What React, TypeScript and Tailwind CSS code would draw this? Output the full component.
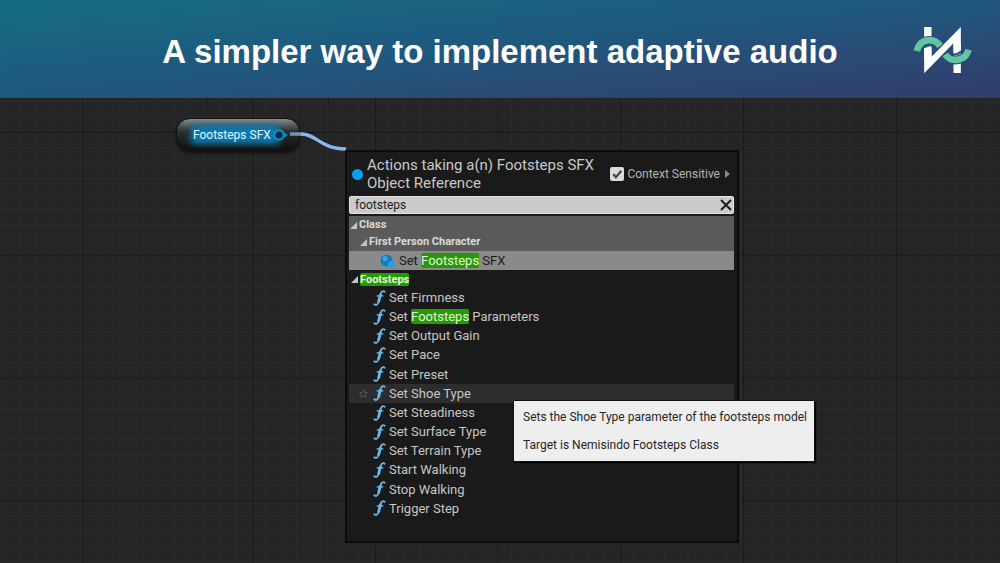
import { useState } from 'react';

const CELL = 15.34;
const MAJOR_X = [82, 252, 375, 497, 620, 743, 896];

const ACTIONS = [
  'Set Firmness',
  'Set Footsteps Parameters',
  'Set Output Gain',
  'Set Pace',
  'Set Preset',
  'Set Shoe Type',
  'Set Steadiness',
  'Set Surface Type',
  'Set Terrain Type',
  'Start Walking',
  'Stop Walking',
  'Trigger Step',
];

function Logo() {
  return (
    <svg viewBox="0 0 176 144" className="h-12 w-[59px]" role="img" aria-label="Nemisindo">
      <path d="M33 3h22v100H33z M121 50h22v91h-22z" fill="#fff" />
      <path d="M11 75C20 38 60 34 82 62" fill="none" stroke="#234f7b" strokeWidth="27" />
      <path d="M94 84C116 114 158 104 166 71" fill="none" stroke="#28487a" strokeWidth="27" />
      <path d="M33 66h22v26L143 3v26L33 142z M121 50l22-23v52h-22z" fill="#fff" />
      <path d="M33 64C46 56 56 57 63 60" fill="none" stroke="#234f7b" strokeWidth="6" />
      <path d="M119 86C128 86 137 83 145 76" fill="none" stroke="#28487a" strokeWidth="6" />
      <path d="M11 75C20 36 62 34 81 60" fill="none" stroke="#63c5a1" strokeWidth="20" />
      <path d="M96 85C116 113 158 104 166 71" fill="none" stroke="#63c5a1" strokeWidth="20" />
    </svg>
  );
}

function GraphGrid() {
  const columns = Array.from({ length: 140 }, (_, i) => 5.3 + i * CELL);
  const rows = Array.from({ length: 90 }, (_, i) => 3.8 + i * CELL);
  return (
    <svg className="absolute inset-0 h-full w-full" aria-hidden="true">
      {columns.map((x) => (
        <line key={x} x1={x} x2={x} y1="0" y2="100%" stroke="#2c2c2c" />
      ))}
      {rows.map((y) => (
        <line key={y} x1="0" x2="100%" y1={y} y2={y} stroke="#2d2d2d" />
      ))}
      {MAJOR_X.map((x) => (
        <line key={x} x1={x + 0.5} x2={x + 0.5} y1="0" y2="100%" stroke="#1b1b1b" />
      ))}
      {Array.from({ length: 12 }, (_, i) => 34.5 + i * CELL * 8).map((y) => (
        <line key={y} x1="0" x2="100%" y1={y} y2={y} stroke="#191919" />
      ))}
      <path d="M206.5 0v9 M328.5 0v9" stroke="#1a1a1a" />
    </svg>
  );
}

function FunctionIcon() {
  return (
    <svg viewBox="0 0 36 46" className="h-4 w-[13px] shrink-0" fill="none" stroke="#6bb8e8" aria-hidden="true">
      <path d="M33 5C27 1 23 5 21 13L15 35C13 42 8 45 3 41" strokeWidth="5" strokeLinecap="round" />
      <path d="M21 12L15 36" strokeWidth="8" />
      <path d="M10 17H29" strokeWidth="4" />
    </svg>
  );
}

function Arrow() {
  return (
    <svg viewBox="0 0 7 7" className="h-[7px] w-[7px] shrink-0" aria-hidden="true">
      <path d="M7 0V7H0z" fill="#c4c4c4" />
    </svg>
  );
}

function Highlighted({ text }: { text: string }) {
  return (
    <span className="whitespace-pre">
      {text.split(/(Footsteps)/).map((part, i) =>
        part === 'Footsteps' ? (
          <mark key={i} className="rounded-xs bg-[#269a04] text-[#e4f5dc]">
            {part}
          </mark>
        ) : (
          part
        ),
      )}
    </span>
  );
}

function VariableNode() {
  return (
    <div className="absolute top-5 left-[176px] flex h-[33px] items-center gap-0.5 overflow-hidden rounded-[14px] border border-[#111] bg-linear-to-b from-[#8a8e90] via-[#2b2f30] via-40% to-[#10110f] pr-[11px] pl-4 shadow-[0_2px_3px_#0009]">
      <div className="absolute top-1.5 right-5 bottom-1.5 left-3.5 bg-[#087bb4] blur-[3px]" />
      <span className="relative text-xs text-[#e2f3fb]">Footsteps SFX</span>
      <svg viewBox="0 0 15 12" className="relative h-3 w-[15px]" aria-hidden="true">
        <circle cx="6" cy="6" r="4.700" fill="#05283a" stroke="#0b8ecb" strokeWidth="2.200" />
        <path d="M11 3.5L15 6L11 8.5z" fill="#0b92d2" />
      </svg>
    </div>
  );
}

function ActionMenu() {
  const [query, setQuery] = useState('footsteps');
  const [contextual, setContextual] = useState(true);
  return (
    <section className="absolute top-[52px] left-[345px] min-h-[393px] w-[394px] border-2 border-[#0b0b0b] bg-[#1a1a1a] pr-[3px] pl-0.5 text-[13px] text-[#c6c6c6]">
      <div className="flex h-11 items-center pr-1 pl-[3px]">
        <span className="mr-1 h-[11px] w-[11px] shrink-0 rounded-full bg-[#08a0ec]" />
        <h2 className="flex-1 text-[15px] leading-[18px] text-[#c8c8c8]">
          Actions taking a(n) Footsteps SFX
          <br />
          Object Reference
        </h2>
        <label className="flex items-center gap-[3px] text-xs text-[#b4b4b4]">
          <span className="grid h-3.5 w-3.5">
            <input
              type="checkbox"
              checked={contextual}
              onChange={(e) => setContextual(e.target.checked)}
              className="col-start-1 row-start-1 h-3.5 w-3.5 appearance-none rounded-xs bg-[#dcdcdc]"
            />
            {contextual && (
              <svg viewBox="0 0 13 13" className="pointer-events-none col-start-1 row-start-1" fill="none" aria-hidden="true">
                <path d="M3 6.5L5.5 9.5L10.5 3.5" stroke="#4a4a4a" strokeWidth="2.2" />
              </svg>
            )}
          </span>
          Context Sensitive
          <svg viewBox="0 0 5 8" className="ml-0.5 h-2 w-[5px]" aria-hidden="true">
            <path d="M0 0L5 4L0 8z" fill="#8a8a8a" />
          </svg>
        </label>
      </div>

      <div className="flex h-[18px] items-center rounded-xs border border-[#e6e6e6] bg-[#cbcbcb] text-[#222]">
        <input
          aria-label="Search actions"
          value={query}
          onChange={(e) => setQuery(e.target.value)}
          className="min-w-0 flex-1 bg-transparent pl-[5px] text-xs outline-none"
        />
        <button type="button" aria-label="Clear search" onClick={() => setQuery('')} className="px-px">
          <svg viewBox="0 0 12 12" className="h-3 w-3" stroke="#1c1c1c" strokeWidth="2" aria-hidden="true">
            <path d="M1 1L11 11M11 1L1 11" />
          </svg>
        </button>
      </div>

      <div className="mt-0.5 bg-[#5a5a5a] text-[11px] font-bold text-[#dadada]">
        <div className="flex h-[18px] items-center gap-0.5 pl-px">
          <Arrow />
          Class
        </div>
        <div className="flex h-[17px] items-center gap-0.5 pl-[11px]">
          <Arrow />
          First Person Character
        </div>
      </div>
      <div className="flex h-[19px] items-center gap-1 bg-[#8a8a8a] pl-[31px] text-[#1b1b1b]">
        <svg viewBox="0 0 15 14" className="h-3.5 w-[15px]" aria-hidden="true">
          <circle cx="6.5" cy="6.5" r="6" fill="#0d7fbe" />
          <circle cx="5" cy="4.5" r="2.5" fill="#3aa5dc" />
          <circle cx="11.5" cy="10.5" r="3.5" fill="#2a9fe0" />
        </svg>
        <Highlighted text="Set Footsteps SFX" />
      </div>
      <div className="flex h-[18px] items-center gap-0.5 pl-0.5 text-[11px] leading-[13px] font-bold">
        <Arrow />
        <Highlighted text="Footsteps" />
      </div>
      <ul className="grid h-[230px] auto-rows-fr">
        {ACTIONS.map((action) => (
          <li
            key={action}
            className={
              action === 'Set Shoe Type'
                ? 'flex items-center gap-[3px] bg-[#2d2d2d] pl-2.5'
                : 'flex items-center gap-[3px] pl-6'
            }
          >
            {action === 'Set Shoe Type' && (
              <svg viewBox="0 0 24 24" className="mr-0.5 h-[9px] w-[9px]" fill="none" stroke="#585858" strokeWidth="2.5" aria-hidden="true">
                <path d="M12 2l3 7 8 .6-6 5 2 7.400-7-4-7 4 2-7.400-6-5 8-.6z" />
              </svg>
            )}
            <FunctionIcon />
            <Highlighted text={action} />
          </li>
        ))}
      </ul>
    </section>
  );
}

export default function App() {
  return (
    <div className="flex min-h-screen flex-col bg-[#252525] font-['Roboto',sans-serif]">
      <header className="grid h-[98px] grid-cols-[1fr_auto_1fr] items-center bg-linear-to-br from-[#136c84] via-[#1f577d] to-[#303b6c] px-7">
        <h1 className="col-start-2 row-start-1 pt-1.5 font-['Liberation_Sans',sans-serif] text-[33px] leading-10 font-bold text-white">
          A simpler way to implement adaptive audio
        </h1>
        <div className="col-start-3 row-start-1 justify-self-end pt-0.5">
          <Logo />
        </div>
      </header>
      <main className="relative min-h-[465px] flex-1 overflow-hidden">
        <GraphGrid />
        <VariableNode />
        <svg viewBox="0 0 56 22" className="absolute top-[33px] left-[290px] h-[22px] w-14" fill="none" aria-hidden="true">
          <path d="M0 3H12" stroke="#7394b8" strokeWidth="3.500" />
          <path d="M11 3C27 3 30 18 56 18" stroke="#84b9f0" strokeWidth="3.500" />
        </svg>
        <ActionMenu />
        <div
          role="tooltip"
          className="absolute top-[302px] left-[513px] flex flex-col gap-3 border border-[#111] bg-[#eee] py-2 pr-[7px] pl-[9px] text-xs leading-4 whitespace-nowrap text-[#262626] shadow-[1px_1px_1px_#000]"
        >
          <p>Sets the Shoe Type parameter of the footsteps model</p>
          <p>Target is Nemisindo Footsteps Class</p>
        </div>
      </main>
    </div>
  );
}
